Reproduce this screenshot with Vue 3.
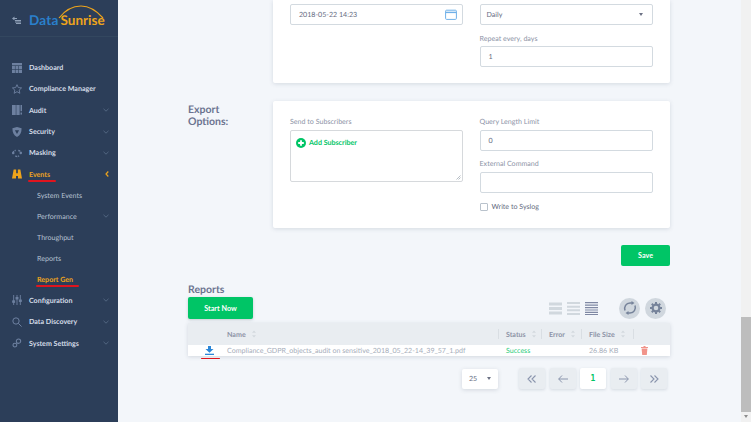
<script setup>
const navItems = [
  { label: 'Dashboard', icon: 'grid' },
  { label: 'Compliance Manager', icon: 'star' },
  { label: 'Audit', icon: 'audit', caret: true },
  { label: 'Security', icon: 'shield', caret: true },
  { label: 'Masking', icon: 'mask', caret: true },
  { label: 'Events', icon: 'binoculars', active: true, open: true, mark: true },
  { label: 'System Events', sub: true },
  { label: 'Performance', sub: true, caret: true },
  { label: 'Throughput', sub: true },
  { label: 'Reports', sub: true },
  { label: 'Report Gen', sub: true, active: true, mark: true },
  { label: 'Configuration', icon: 'sliders', caret: true },
  { label: 'Data Discovery', icon: 'search', caret: true },
  { label: 'System Settings', icon: 'gears', caret: true }
]
const columns = [
  { label: 'Name', cls: 'c-name' },
  { label: 'Status', cls: 'c-status' },
  { label: 'Error', cls: 'c-error' },
  { label: 'File Size', cls: 'c-size' }
]
</script>

<template>
  <div class="app">
    <aside class="sidebar">
      <div class="brand">
        <svg class="back" viewBox="0 0 9 8" width="9" height="8">
          <path d="M0 2.500 2.500 .5V2H5V3H2.500V4.500Z" fill="#8fa0b8" />
          <path d="M3 4.500H9M3 6H9M4 7.500H9" stroke="#8fa0b8" stroke-width="1" />
        </svg>
        <div class="logo">
          <svg class="arc" viewBox="0 0 46 14" width="46" height="14">
            <path d="M1 13C8 4 15 1 23 1 31 1 38 5 45 13" fill="none" stroke="#eea41c" stroke-width="1.200" />
          </svg>
          <span class="logo-data">Data</span><span class="logo-sun">Sunrise</span>
        </div>
      </div>
      <nav class="nav">
        <div v-for="item in navItems" :key="item.label" class="nav-row" :class="{ sub: item.sub, active: item.active }">
          <span v-if="!item.sub" class="nav-icon">
            <svg viewBox="0 0 12 12" width="10" height="10">
              <g v-if="item.icon === 'grid'" fill="#6d80a0">
                <rect x="0" y="0" width="12" height="2.800" />
                <rect x="0" y="3.500" width="3.500" height="3.800" /><rect x="4.200" y="3.500" width="3.500" height="3.800" /><rect x="8.400" y="3.500" width="3.600" height="3.800" />
                <rect x="0" y="8" width="3.500" height="4" /><rect x="4.200" y="8" width="3.500" height="4" /><rect x="8.400" y="8" width="3.600" height="4" />
              </g>
              <path v-else-if="item.icon === 'star'" d="M6 .8 7.600 4.300 11.500 4.700 8.600 7.300 9.400 11.200 6 9.200 2.600 11.200 3.400 7.300.5 4.700 4.400 4.300Z" fill="none" stroke="#6d80a0" stroke-width="1.100" />
              <g v-else-if="item.icon === 'audit'" fill="#6d80a0">
                <rect x="0" y="0" width="4.500" height="12" /><rect x="5.200" y="0" width="4" height="12" /><rect x="10.200" y="0" width="1.800" height="7.500" /><rect x="10.200" y="9" width="1.800" height="2.500" />
              </g>
              <path v-else-if="item.icon === 'shield'" d="M.5 1.500 6 0 11.500 1.500C11.500 6.500 10 10 6 12 2 10 .5 6.500.5 1.500ZM3.500 4 6 8.500 8.500 4Z" fill="#6d80a0" fill-rule="evenodd" />
              <g v-else-if="item.icon === 'mask'" fill="none" stroke="#6d80a0" stroke-width="1.600">
                <path d="M1 6C2 3.500 3 3 4.500 3M7.500 3C9 3 10 3.500 11 6M4 9.500C5.500 10.500 7 10.500 8.500 9.500" stroke-dasharray="2.500 1" />
                <circle cx="1.500" cy="6" r=".7" fill="#6d80a0" /><circle cx="10.500" cy="6" r=".7" fill="#6d80a0" />
              </g>
              <path v-else-if="item.icon === 'binoculars'" d="M2 .5H5V5H7V.5H10L12 11.500H7.200V8.500H4.800V11.500H0Z" fill="#eea41c" />
              <g v-else-if="item.icon === 'sliders'" stroke="#6d80a0" stroke-width="1.100" fill="#6d80a0">
                <path d="M2 0V12M6 0V12M10 0V12" /><rect x=".8" y="7" width="2.400" height="1.800" /><rect x="4.800" y="3" width="2.400" height="1.800" /><rect x="8.800" y="6" width="2.400" height="1.800" />
              </g>
              <g v-else-if="item.icon === 'search'" fill="none" stroke="#6d80a0" stroke-width="1.200">
                <circle cx="4.800" cy="4.800" r="3.800" /><path d="M7.600 7.600 11.500 11.500" />
              </g>
              <g v-else-if="item.icon === 'gears'" fill="none" stroke="#6d80a0" stroke-width="1.300">
                <circle cx="7.800" cy="3.800" r="2.600" /><circle cx="3.500" cy="8.500" r="2.300" />
              </g>
            </svg>
          </span>
          <span class="nav-label"><span class="nav-text">{{ item.label }}<i v-if="item.mark" class="redline"></i></span></span>
          <svg v-if="item.caret" class="caret" viewBox="0 0 6 4" width="6" height="4">
            <path d="M.5 .8 3 3.200 5.500 .8" fill="none" stroke="#566a85" stroke-width=".9" />
          </svg>
          <svg v-if="item.open" class="caret" viewBox="0 0 4 6" width="4" height="6">
            <path d="M3.300 .5 1 3 3.300 5.500" fill="none" stroke="#eea41c" stroke-width="1.200" />
          </svg>
        </div>
      </nav>
    </aside>

    <main class="main">
      <section class="band first">
        <div class="side-title"></div>
        <div class="card card-top">
          <div class="col">
            <div class="input with-icon">
              <span>2018-05-22 14:23</span>
              <svg viewBox="0 0 12 11" width="12" height="11">
                <rect x=".6" y="1.200" width="10.800" height="9.200" rx="1" fill="none" stroke="#6fb0e8" stroke-width="1" />
                <path d="M.6 3.400H11.400" stroke="#6fb0e8" stroke-width="1.400" />
              </svg>
            </div>
          </div>
          <div class="col">
            <div class="input with-icon select">
              <span>Daily</span><i class="tri"></i>
            </div>
            <label class="field-label gap">Repeat every, days</label>
            <div class="input">1</div>
          </div>
        </div>
      </section>

      <section class="band">
        <h2 class="side-title">Export Options:</h2>
        <div class="card card-export">
          <div class="col">
            <label class="field-label">Send to Subscribers</label>
            <div class="textarea">
              <span class="add-icon">
                <svg viewBox="0 0 10 10" width="10" height="10">
                  <circle cx="5" cy="5" r="5" fill="#00c566" />
                  <path d="M5 2.200V7.800M2.200 5H7.800" stroke="#fff" stroke-width="1.800" />
                </svg>
              </span>
              <span class="add-text">Add Subscriber</span>
              <svg class="grip" viewBox="0 0 5 5" width="5" height="5">
                <path d="M.5 4.500 4.500 .5M2.500 4.500 4.500 2.500" stroke="#9aa3ad" stroke-width=".7" />
              </svg>
            </div>
          </div>
          <div class="col">
            <label class="field-label">Query Length Limit</label>
            <div class="input">0</div>
            <label class="field-label gap">External Command</label>
            <div class="input"></div>
            <div class="check-row">
              <span class="check"></span>
              <span>Write to Syslog</span>
            </div>
          </div>
        </div>
      </section>

      <div class="save-row">
        <button class="btn save">Save</button>
      </div>

      <section class="reports">
        <h2 class="reports-title">Reports</h2>
        <div class="toolbar">
          <button class="btn start">Start Now</button>
          <div class="tools">
            <div class="density">
              <svg viewBox="0 0 13 13" width="13" height="13"><path d="M0 2H13M0 6.500H13M0 11H13" stroke="#d1d8de" stroke-width="3" /></svg>
              <svg viewBox="0 0 13 13" width="13" height="13"><path d="M0 1H13M0 4.700H13M0 8.300H13M0 12H13" stroke="#d1d8de" stroke-width="2" /></svg>
              <svg viewBox="0 0 13 13" width="13" height="13"><path d="M0 .7H13M0 3.200H13M0 5.600H13M0 8H13M0 10.400H13M0 12.500H13" stroke="#7f88a3" stroke-width="1.200" /></svg>
            </div>
            <div class="round">
              <svg viewBox="0 0 14 14" width="14" height="14">
                <path d="M2 9.500C.8 6 3 2 7 2H9M12 4.500C13.200 8 11 12 7 12H5" fill="none" stroke="#76839a" stroke-width="1.500" />
                <path d="M8.500 0 11.500 2 8.500 4ZM5.500 10 2.500 12 5.500 14Z" fill="#76839a" />
              </svg>
            </div>
            <div class="round">
              <svg viewBox="0 0 14 14" width="14" height="14">
                <circle cx="7" cy="7" r="3.400" fill="none" stroke="#76839a" stroke-width="2.200" />
                <path d="M7 1V3M7 11V13M1 7H3M11 7H13M2.800 2.800 4.200 4.200M9.800 9.800 11.200 11.200M2.800 11.200 4.200 9.800M9.800 4.200 11.200 2.800" stroke="#76839a" stroke-width="2" />
              </svg>
            </div>
          </div>
        </div>

        <div class="table">
          <div class="thead">
            <div class="c-dl"></div>
            <div v-for="col in columns" :key="col.label" class="th" :class="col.cls">
              <span>{{ col.label }}</span>
              <svg viewBox="0 0 5 9" width="4" height="8">
                <path d="M2.500 0 5 3H0Z" fill="#d3d8de" /><path d="M2.500 9 5 6H0Z" fill="#d3d8de" />
              </svg>
            </div>
            <div class="c-del th"></div>
          </div>
          <div class="tbody">
            <div class="c-dl dl">
              <svg viewBox="0 0 9 9" width="9" height="9">
                <path d="M3 0H6V3H8.500L4.500 6.800 .5 3H3Z" fill="#2c87d8" /><rect x="0" y="7.700" width="9" height="1.300" fill="#2c87d8" />
              </svg>
              <i class="redline dl-line"></i>
            </div>
            <div class="td c-name">Compliance_GDPR_objects_audit on sensitive_2018_05_22-14_39_57_1.pdf</div>
            <div class="td c-status ok">Success</div>
            <div class="td c-error"></div>
            <div class="td c-size">26.86 KB</div>
            <div class="td c-del">
              <svg viewBox="0 0 7 9" width="7" height="9">
                <path d="M2.500 0H4.500V1H7V2H0V1H2.500ZM.6 2.500H6.400L5.800 9H1.200Z" fill="#f1948a" />
              </svg>
            </div>
          </div>
        </div>

        <div class="pager">
          <div class="per-page"><span>25</span><i class="tri"></i></div>
          <div class="pages">
            <button class="pg">
              <svg viewBox="0 0 10 8" width="10" height="8"><path d="M4.500 .5 1 4 4.500 7.500M8.500 .5 5 4 8.500 7.500" fill="none" stroke="#8a95ad" stroke-width="1.100" /></svg>
            </button>
            <button class="pg">
              <svg viewBox="0 0 10 8" width="10" height="8"><path d="M4 .5 .7 4 4 7.500M.7 4H10" fill="none" stroke="#8a95ad" stroke-width="1" /></svg>
            </button>
            <button class="pg current">1</button>
            <button class="pg">
              <svg viewBox="0 0 10 8" width="10" height="8"><path d="M6 .5 9.300 4 6 7.500M9.300 4H0" fill="none" stroke="#8a95ad" stroke-width="1" /></svg>
            </button>
            <button class="pg">
              <svg viewBox="0 0 10 8" width="10" height="8"><path d="M1.500 .5 5 4 1.500 7.500M5.500 .5 9 4 5.500 7.500" fill="none" stroke="#8a95ad" stroke-width="1.100" /></svg>
            </button>
          </div>
        </div>
      </section>
    </main>

    <div class="scrollbar">
      <div class="sb-arrow top"></div>
      <div class="sb-track"><div class="sb-thumb"></div></div>
      <div class="sb-arrow bottom"></div>
    </div>
  </div>
</template>

<style scoped>
.app {
  display: flex;
  width: 751px;
  height: 422px;
  overflow: hidden;
  font-family: Lato, "Open Sans", sans-serif;
  font-size: 7.100px;
  text-rendering: geometricPrecision;
  color: #666c7f;
  background: #f3f6fa;
}
.sidebar {
  flex: 0 0 118px;
  background: #2c3e59;
}
.brand {
  height: 37px;
  display: flex;
  align-items: center;
  padding-left: 12px;
  border-bottom: 1px solid #33475f;
  box-sizing: border-box;
}
.back { margin-right: 8px; margin-top: 4px; }
.logo {
  position: relative;
  font-weight: 700;
  font-size: 13.500px;
  line-height: 14px;
  margin-top: 4px;
  white-space: nowrap;
}
.arc { position: absolute; left: 29px; top: -8px; }
.logo-data { color: #2a80cc; margin-right: 2px; letter-spacing: .2px; }
.logo-sun { color: #eea41c; }
.nav { padding-top: 20px; }
.nav-row {
  height: 21.300px;
  display: flex;
  align-items: center;
  padding-left: 12px;
  padding-right: 9px;
  color: #d5dde8;
  font-weight: 700;
}
.nav-icon { width: 10px; height: 10px; margin-right: 7px; display: flex; }
.nav-label { flex: 1; }
.nav-text { position: relative; display: inline-block; }
.nav-row.sub { height: 21px; padding-left: 37px; font-weight: 400; color: #b6c1d1; }
.nav-row.active .nav-label { color: #eea41c; font-weight: 700; }
.redline {
  position: absolute;
  left: -1px;
  right: -6px;
  bottom: -3px;
  height: 1.500px;
  background: #e0141e;
  border-radius: 1px;
}
.main {
  flex: 1;
  min-width: 0;
  padding: 0 71px 0 70px;
}
.band { display: flex; margin-bottom: 17px; }
.band.first { height: 83px; margin-bottom: 18px; }
.side-title {
  flex: 0 0 85px;
  box-sizing: border-box;
  padding-right: 30px;
  margin: 3px 0 0;
  font-size: 10.500px;
  line-height: 12px;
  font-weight: 700;
  color: #6c7490;
}
.card {
  flex: 1;
  background: #fff;
  border-radius: 0 0 2px 2px;
  box-shadow: 0 1px 4px rgba(80, 95, 115, .18);
  display: flex;
  gap: 17px;
  padding: 0 17px;
  box-sizing: border-box;
}
.card-top { padding-top: 4px; }
.card-top .field-label { margin-bottom: 3px; }
.card-top .field-label.gap { margin-top: 8px; }
.card-export { height: 127px; border-radius: 2px; padding-top: 15px; }
.col { width: 172.500px; flex: none; }
.col + .col { width: 173px; }
.input {
  height: 21px;
  box-sizing: border-box;
  border: 1.500px solid #d3dae0;
  border-radius: 2px;
  padding: 0 8px;
  display: flex;
  align-items: center;
  color: #666c7f;
}
.with-icon { justify-content: space-between; padding-right: 5px; }
.select { padding-left: 6px; padding-right: 9px; }
.tri {
  width: 0;
  height: 0;
  border-left: 2px solid transparent;
  border-right: 2px solid transparent;
  border-top: 3px solid #6c7285;
}
.field-label {
  display: block;
  height: 10px;
  line-height: 12px;
  color: #8d93a6;
  margin-bottom: 4px;
}
.field-label.gap { margin-top: 7px; }
.textarea {
  position: relative;
  height: 52px;
  box-sizing: border-box;
  border: 1.500px solid #d6d9dc;
  border-radius: 2px;
  display: flex;
  align-items: flex-start;
  padding: 6px 0 0 5px;
  color: #00c566;
  font-weight: 700;
}
.add-icon { width: 10px; height: 10px; margin-right: 3px; margin-top: 1px; display: flex; }
.add-text { line-height: 11px; }
.grip { position: absolute; right: 1px; bottom: 1px; }
.check-row { display: flex; align-items: center; margin-top: 9px; gap: 4px; }
.check {
  width: 6px;
  height: 6px;
  border: 1px solid #b9c2cc;
  border-radius: 1px;
}
.save-row { display: flex; justify-content: flex-end; margin-bottom: 17px; }
.btn {
  border: 0;
  border-radius: 2px;
  background: #00c566;
  color: #fff;
  font: 700 7.200px Lato, "Open Sans", sans-serif;
}
.save { width: 49px; height: 21px; }
.reports { position: relative; }
.reports-title {
  margin: 0 0 2px;
  height: 12px;
  font-size: 10.500px;
  line-height: 14px;
  font-weight: 700;
  color: #6c7490;
}
.toolbar {
  display: flex;
  justify-content: space-between;
  align-items: center;
  height: 22px;
  margin-bottom: 4px;
}
.start { width: 65px; height: 22px; box-shadow: 0 1px 3px rgba(60, 80, 90, .25); }
.tools { display: flex; align-items: center; gap: 5px; margin-right: 4px; }
.density { display: flex; gap: 5px; margin-right: 16px; align-items: center; }
.round {
  width: 21px;
  height: 21px;
  border-radius: 50%;
  background: #d0d7de;
  display: flex;
  align-items: center;
  justify-content: center;
}
.table { box-shadow: 0 1px 4px rgba(80, 95, 115, .2); margin-bottom: 12px; }
.thead, .tbody { display: flex; align-items: center; }
.thead { height: 22px; background: #e9edf1; font-weight: 700; color: #8d93a6; }
.tbody { height: 11px; background: #fff; color: #a6adba; }
.c-dl { flex: 0 0 39px; display: flex; justify-content: center; position: relative; box-sizing: border-box; padding-left: 3px; }
.dl-line { left: 13px; right: auto; bottom: -4px; width: 19px; }
.c-name { flex: 0 0 271px; white-space: nowrap; }
.c-status { flex: 0 0 43px; }
.c-error { flex: 0 0 40px; }
.c-size { flex: 0 0 52px; }
.c-del { flex: 1; }
.th { display: flex; align-items: center; gap: 6px; height: 10px; }
.th.c-status, .th.c-error, .th.c-size, .th.c-del { border-left: 1px solid #d9dee3; padding-left: 7px; box-sizing: border-box; }
.td.c-status, .td.c-error, .td.c-size { padding-left: 8px; box-sizing: border-box; }
.td.c-del { padding-left: 8px; display: flex; }
.ok { color: #2ecc7d; }
.pager { display: flex; align-items: center; justify-content: flex-end; padding-right: 3px; }
.per-page {
  width: 36px;
  height: 20px;
  box-sizing: border-box;
  background: #fff;
  border-radius: 2px;
  box-shadow: 0 1px 4px rgba(80, 95, 115, .2);
  display: flex;
  align-items: center;
  justify-content: space-between;
  padding: 0 7px;
  margin-right: 21px;
}
.pages { display: flex; gap: 4.500px; align-items: center; }
.pg {
  width: 26px;
  height: 21px;
  padding: 0;
  border: 0;
  border-radius: 2px;
  background: #e9edf1;
  box-shadow: 0 1px 3px rgba(80, 95, 115, .18);
  display: flex;
  align-items: center;
  justify-content: center;
}
.pg.current {
  background: #fff;
  color: #00c566;
  font: 700 8px "DejaVu Sans Mono", monospace;
}
.scrollbar {
  flex: 0 0 10px;
  display: flex;
  flex-direction: column;
  background: #f1f1f1;
}
.sb-arrow { height: 10px; flex: none; position: relative; }
.sb-arrow.bottom::after {
  content: "";
  position: absolute;
  left: 3px;
  top: 3px;
  border-left: 2px solid transparent;
  border-right: 2px solid transparent;
  border-top: 3px solid #8c8c8c;
}
.sb-track { flex: 1; display: flex; flex-direction: column; justify-content: flex-end; }
.sb-thumb { height: 95px; background: #bdbdbd; }
</style>
